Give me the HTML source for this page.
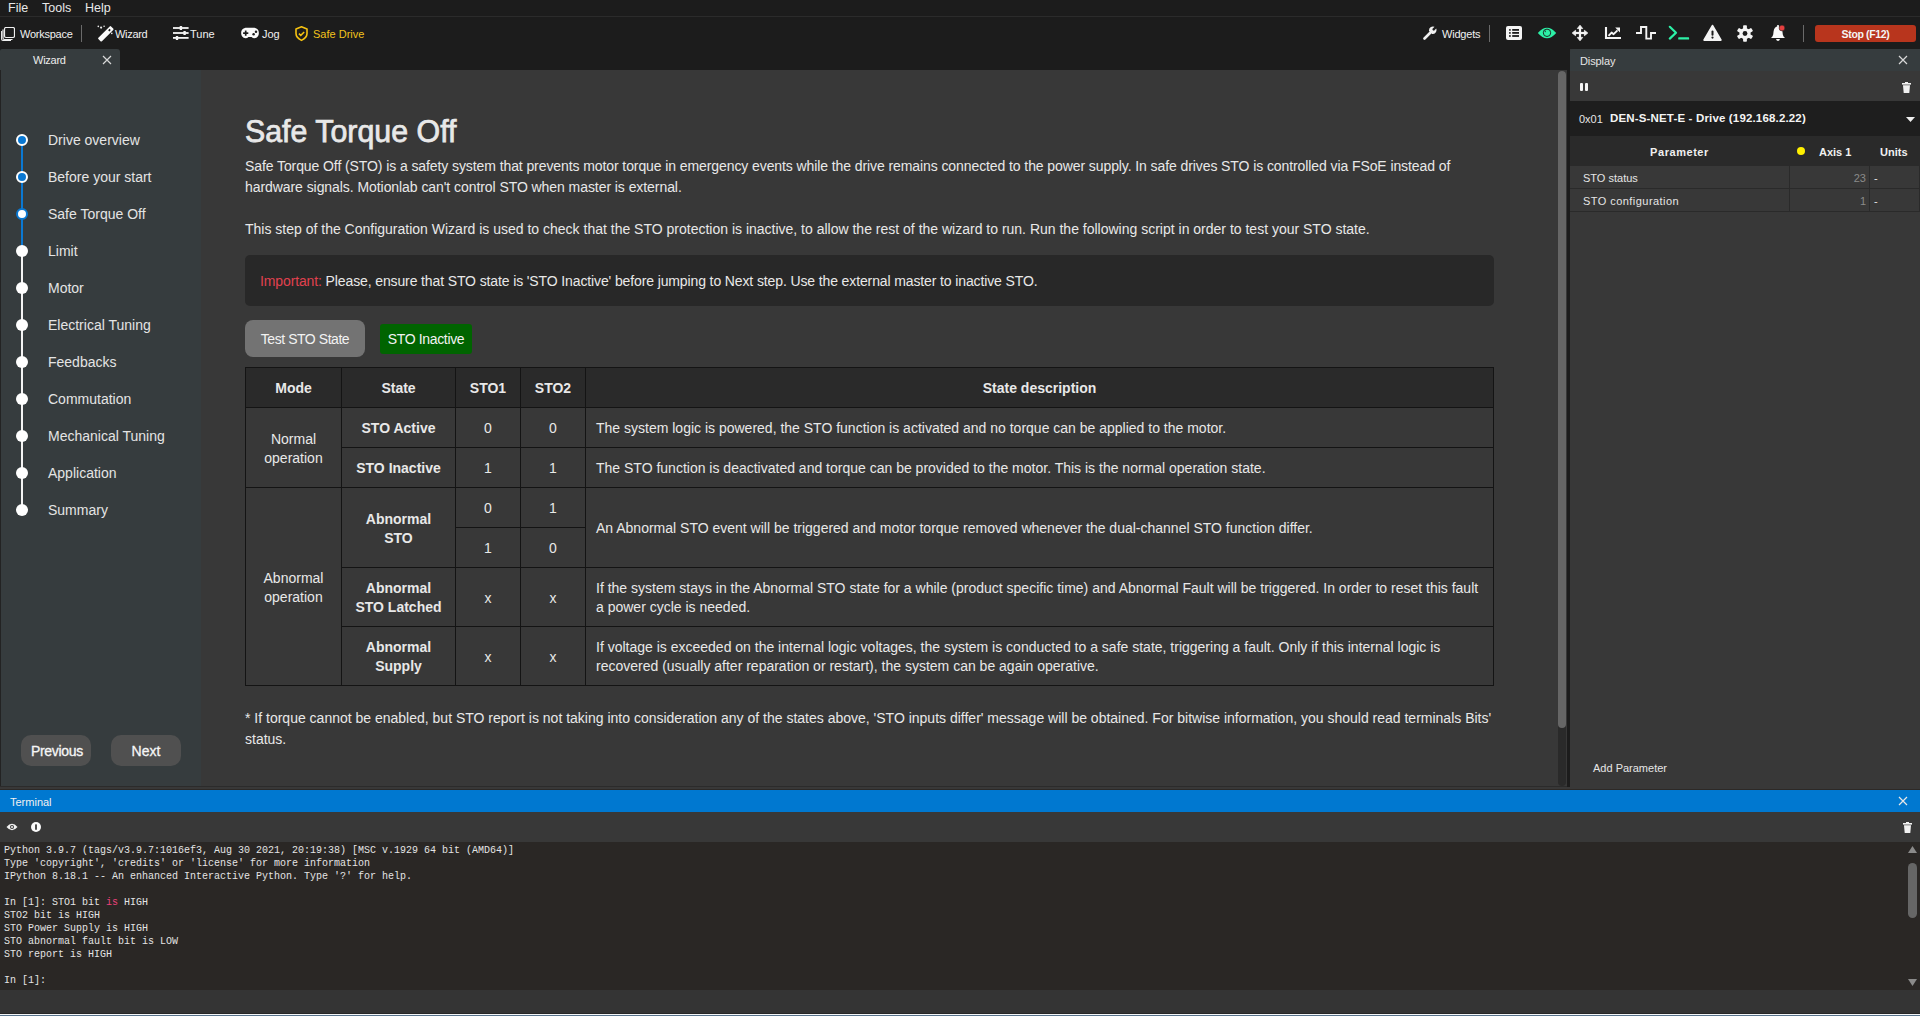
<!DOCTYPE html>
<html><head><meta charset="utf-8">
<style>
*{margin:0;padding:0;box-sizing:border-box}
html,body{width:1920px;height:1016px;overflow:hidden;background:#1c1c1c;font-family:"Liberation Sans",sans-serif;color:#e6e6e6}
.abs{position:absolute}
.t{position:absolute;white-space:pre;line-height:1}
/* menubar */
#menubar{left:0;top:0;width:1920px;height:17px;background:#1c1c1c;border-bottom:1px solid #2b2b2b}
#toolbar{left:0;top:18px;width:1920px;height:31px;background:#1c1c1c}
#sidebar{left:0;top:70px;width:201px;height:716px;background:#363c3e;border-left:1px solid #232323}
#main{left:201px;top:70px;width:1357px;height:716px;background:#383838}
#scroll{left:1558px;top:70px;width:9px;height:716px;background:#383838}
#split{left:1567px;top:49px;width:3px;height:738px;background:#1c1c1c}
#display{left:1570px;top:49px;width:350px;height:741px;background:#383838}
#gap{left:0;top:786px;width:1920px;height:4px;background:#383838;border-bottom:1px solid #2d2926}
#term{left:0;top:790px;width:1920px;height:226px;background:#383838}

#sto{border-collapse:collapse;table-layout:fixed;width:1248px}
#sto th,#sto td{border:1px solid #141414;font-size:14px;text-align:center;vertical-align:middle;color:#e8e8e8;line-height:19px;padding:2px 0 0 0}
#sto th{background:#2a2a2a;font-weight:bold}
#sto td{background:#383838}
#sto td.b{font-weight:bold}
#sto td.d{text-align:left;padding-left:10px;white-space:pre}
</style></head><body>
<div id="menubar" class="abs"></div>
<div id="toolbar" class="abs"></div>
<div id="sidebar" class="abs"></div>
<div id="main" class="abs"></div>
<div id="scroll" class="abs"></div>
<div id="split" class="abs"></div>
<div id="display" class="abs"></div>
<div id="gap" class="abs"></div>
<div id="term" class="abs"></div>
<div class="abs" style="left:0;top:786px;width:1567px;height:1px;background:#2b2b2b"></div>
<div class="abs" style="left:1567px;top:786px;width:3px;height:1px;background:#1c1c1c"></div>
<!-- MENUBAR -->
<div class="t" style="left:8px;top:2px;font-size:12.5px;color:#e8e8e8">File</div>
<div class="t" style="left:42px;top:2px;font-size:12.5px;color:#e8e8e8">Tools</div>
<div class="t" style="left:85px;top:2px;font-size:12.5px;color:#e8e8e8">Help</div>
<!-- TOOLBAR LEFT -->
<svg class="abs" style="left:1px;top:27px" width="14" height="14" viewBox="0 0 14 14"><rect x="3.5" y="0.5" width="10" height="10" rx="1.5" fill="#1c1c1c" stroke="#f0f0f0" stroke-width="1.2"/><path d="M2 2.5 V11 Q2 12.5 3.5 12.5 H11.5" fill="none" stroke="#f0f0f0" stroke-width="1.2"/><path d="M0.6 4 V12 Q0.6 13.4 2 13.4 H10" fill="none" stroke="#f0f0f0" stroke-width="1.1"/></svg>
<div class="t" style="left:20px;top:29px;font-size:11px;color:#f0f0f0;letter-spacing:-0.25px">Workspace</div>
<div class="abs" style="left:81px;top:25px;width:1px;height:17px;background:#6a6a6a"></div>
<svg class="abs" style="left:96px;top:24px" width="18" height="18" viewBox="0 0 18 18"><g transform="rotate(-45 9.8 9.8)"><rect x="0.8" y="7.3" width="18" height="5" rx="1" fill="#fafafa"/><rect x="14" y="8.9" width="1.9" height="1.8" fill="#1c1c1c"/></g><circle cx="2.3" cy="2.4" r="0.8" fill="#eee"/><circle cx="5.1" cy="3.6" r="1.1" fill="#eee"/><circle cx="8.1" cy="2.2" r="0.8" fill="#eee"/><circle cx="15.8" cy="9.4" r="0.8" fill="#eee"/></svg>
<div class="t" style="left:115px;top:29px;font-size:11px;color:#f0f0f0;letter-spacing:-0.3px">Wizard</div>
<svg class="abs" style="left:173px;top:25px" width="16" height="16" viewBox="0 0 16 16"><g fill="#f4f4f4"><rect x="0" y="2.1" width="15.6" height="1.8"/><rect x="0" y="7.1" width="15.6" height="1.8"/><rect x="0" y="12" width="15.6" height="1.8"/><rect x="6.7" y="1" width="2.4" height="4" rx="0.5"/><rect x="10.4" y="6" width="2.4" height="4" rx="0.5"/><rect x="2.8" y="10.9" width="2.4" height="4" rx="0.5"/></g></svg>
<div class="t" style="left:190px;top:29px;font-size:11px;color:#f0f0f0">Tune</div>
<svg class="abs" style="left:240px;top:27px" width="20" height="12" viewBox="0 0 20 12"><path d="M5.5 0.7 H14.5 A5.4 5.4 0 0 1 14.5 11.3 Q12.6 11.3 11.6 10 H8.4 Q7.4 11.3 5.5 11.3 A5.4 5.4 0 0 1 5.5 0.7 Z" fill="#fafafa"/><rect x="3.1" y="5.3" width="5.2" height="1.7" fill="#1c1c1c"/><rect x="4.85" y="3.55" width="1.7" height="5.2" fill="#1c1c1c"/><circle cx="13.6" cy="7.2" r="1.25" fill="#1c1c1c"/><circle cx="16" cy="4.8" r="1.25" fill="#1c1c1c"/></svg>
<div class="t" style="left:262px;top:29px;font-size:11px;color:#f0f0f0">Jog</div>
<svg class="abs" style="left:294px;top:25px" width="15" height="17" viewBox="0 0 15 17"><path d="M7.5 1.8 L13 3.9 V8.6 Q13 12.8 7.5 15.4 Q2 12.8 2 8.6 V3.9 Z" fill="none" stroke="#f5c211" stroke-width="1.6" stroke-linejoin="round"/><path d="M4.9 8.6 L6.8 10.4 L10.2 7" fill="none" stroke="#f5c211" stroke-width="1.5"/></svg>
<div class="t" style="left:313px;top:29px;font-size:11px;color:#f2c21b">Safe Drive</div>
<!-- TOOLBAR RIGHT -->
<svg class="abs" style="left:1423px;top:26px" width="14" height="14" viewBox="0 0 14 14"><path d="M1.5 12.5 L7 7" stroke="#f0f0f0" stroke-width="2.6" stroke-linecap="round"/><path d="M6 5 A4 4 0 0 1 11.5 0.8 L9.3 3 L9.8 4.3 L11 4.7 L13.2 2.5 A4 4 0 0 1 9 8 Z" fill="#f0f0f0"/></svg>
<div class="t" style="left:1442px;top:29px;font-size:11px;color:#f0f0f0;letter-spacing:-0.2px">Widgets</div>
<div class="abs" style="left:1489px;top:25px;width:1px;height:17px;background:#6a6a6a"></div>
<svg class="abs" style="left:1506px;top:26px" width="16" height="14" viewBox="0 0 16 14"><rect x="0" y="0" width="16" height="14" rx="2" fill="#f4f4f4"/><g fill="#1c1c1c"><circle cx="3.9" cy="3.9" r="0.95"/><circle cx="3.9" cy="6.9" r="0.95"/><circle cx="3.9" cy="10" r="0.95"/><rect x="6.2" y="3" width="6.8" height="1.8"/><rect x="6.2" y="6" width="6.8" height="1.8"/><rect x="6.2" y="9.1" width="6.8" height="1.8"/></g></svg>
<svg class="abs" style="left:1537px;top:26px" width="20" height="14" viewBox="0 0 20 14"><path d="M0.8 7 Q10 -3.5 19.2 7 Q10 17.5 0.8 7 Z" fill="#2cf0a6"/><circle cx="10" cy="6.8" r="3.7" fill="none" stroke="#1c1c1c" stroke-width="0.9"/><path d="M8.2 4.6 Q8 5.8 8.9 6" fill="none" stroke="#1c1c1c" stroke-width="0.9"/></svg>
<svg class="abs" style="left:1571px;top:24px" width="18" height="18" viewBox="0 0 18 18"><g fill="#f4f4f4" stroke="#f4f4f4" stroke-linejoin="round" stroke-width="0.8"><path d="M9 1.2 L11.7 4.6 H6.3 Z"/><path d="M9 16.8 L11.7 13.4 H6.3 Z"/><path d="M1.2 9 L4.6 6.3 V11.7 Z"/><path d="M16.8 9 L13.4 6.3 V11.7 Z"/></g><rect x="7.9" y="4" width="2.2" height="10" fill="#f4f4f4"/><rect x="4" y="7.9" width="10" height="2.2" fill="#f4f4f4"/></svg>
<svg class="abs" style="left:1604px;top:26px" width="18" height="14" viewBox="0 0 18 14"><path d="M2 1 V12 H17" fill="none" stroke="#f4f4f4" stroke-width="2.1"/><path d="M4.5 9.8 L7.6 6.6 L9.6 8.2 L13.5 4.3" fill="none" stroke="#f4f4f4" stroke-width="1.9" stroke-linejoin="round"/><path d="M11.2 1.6 H16 V6.4 Z" fill="#f4f4f4"/></svg>
<svg class="abs" style="left:1636px;top:26px" width="21" height="15" viewBox="0 0 21 15"><path d="M0 7 H5 V1 H10.3 V12.6 H15 V7 H20" fill="none" stroke="#f4f4f4" stroke-width="1.9"/></svg>
<svg class="abs" style="left:1668px;top:25px" width="22" height="16" viewBox="0 0 22 16"><path d="M1.8 1.8 L8 7.7 L1.8 13.6" fill="none" stroke="#2cf0a6" stroke-width="2.2" stroke-linecap="round" stroke-linejoin="round"/><rect x="10.2" y="12.3" width="10.9" height="2.3" rx="0.6" fill="#2cf0a6"/></svg>
<svg class="abs" style="left:1703px;top:24px" width="19" height="18" viewBox="0 0 19 18"><path d="M9.5 1.6 L17.8 16 H1.2 Z" fill="#f4f4f4" stroke="#f4f4f4" stroke-width="1.8" stroke-linejoin="round"/><rect x="8.5" y="6.6" width="2" height="5.2" rx="1" fill="#1c1c1c"/><circle cx="9.5" cy="13.6" r="1.1" fill="#1c1c1c"/></svg>
<svg class="abs" style="left:1737px;top:25px" width="16" height="17" viewBox="0 0 16 17"><g fill="#f4f4f4"><circle cx="8" cy="8.5" r="5.6"/><rect x="6.1" y="0.3" width="3.8" height="16.4" rx="0.8"/><rect x="6.1" y="0.3" width="3.8" height="16.4" rx="0.8" transform="rotate(60 8 8.5)"/><rect x="6.1" y="0.3" width="3.8" height="16.4" rx="0.8" transform="rotate(120 8 8.5)"/></g><circle cx="8" cy="8.5" r="2.4" fill="#1c1c1c"/></svg>
<svg class="abs" style="left:1770px;top:24px" width="17" height="18" viewBox="0 0 17 18"><rect x="7.1" y="0.9" width="1.8" height="2" rx="0.6" fill="#fafafa"/><path d="M8 2.2 Q4.2 2.6 3.6 7.2 L3.2 10.6 Q2.8 12.8 1 13.9 H15 Q13.2 12.8 12.8 10.6 L12.4 7.2 Q11.8 2.6 8 2.2 Z" fill="#fafafa"/><path d="M6 14.9 H10 Q9.4 16.9 8 16.9 Q6.6 16.9 6 14.9 Z" fill="#fafafa"/><circle cx="12" cy="4" r="2.9" fill="#e64040" stroke="#1c1c1c" stroke-width="0.6"/></svg>
<div class="abs" style="left:1803px;top:25px;width:1px;height:17px;background:#6a6a6a"></div>
<div class="abs" style="left:1815px;top:25px;width:101px;height:17px;background:#b8351d;border-radius:3px"></div>
<div class="t" style="left:1815px;top:29px;width:101px;text-align:center;font-size:10.5px;font-weight:bold;color:#f4f4f4;letter-spacing:-0.35px">Stop (F12)</div>
<!-- TAB -->
<div class="abs" style="left:0;top:49px;width:120px;height:21px;background:#363c3e;border-radius:2px 3px 0 0"></div>
<div class="t" style="left:33px;top:55px;font-size:11px;color:#ececec;letter-spacing:-0.25px">Wizard</div>
<svg class="abs" style="left:102px;top:55px" width="10" height="10" viewBox="0 0 10 10"><path d="M1 1 L9 9 M9 1 L1 9" stroke="#d8d8d8" stroke-width="1.2"/></svg>
<!-- SIDEBAR STEPPER -->
<div class="abs" style="left:21px;top:140px;width:2.4px;height:111px;background:#0a78d2"></div>
<div class="abs" style="left:21px;top:251px;width:2.4px;height:259px;background:#f4f4f4"></div>
<div class="abs" style="left:16px;top:134px;width:12px;height:12px;border-radius:50%;background:#0a78d2;border:2px solid #ffffff"></div>
<div class="t" style="left:48px;top:133px;font-size:14px;color:#e4e4e4">Drive overview</div>
<div class="abs" style="left:16px;top:171px;width:12px;height:12px;border-radius:50%;background:#0a78d2;border:2px solid #ffffff"></div>
<div class="t" style="left:48px;top:170px;font-size:14px;color:#e4e4e4">Before your start</div>
<div class="abs" style="left:16px;top:208px;width:12px;height:12px;border-radius:50%;background:#ffffff;border:2px solid #0a78d2"></div>
<div class="t" style="left:48px;top:207px;font-size:14px;color:#e4e4e4">Safe Torque Off</div>
<div class="abs" style="left:16px;top:245px;width:12px;height:12px;border-radius:50%;background:#ffffff"></div>
<div class="t" style="left:48px;top:244px;font-size:14px;color:#e4e4e4">Limit</div>
<div class="abs" style="left:16px;top:282px;width:12px;height:12px;border-radius:50%;background:#ffffff"></div>
<div class="t" style="left:48px;top:281px;font-size:14px;color:#e4e4e4">Motor</div>
<div class="abs" style="left:16px;top:319px;width:12px;height:12px;border-radius:50%;background:#ffffff"></div>
<div class="t" style="left:48px;top:318px;font-size:14px;color:#e4e4e4">Electrical Tuning</div>
<div class="abs" style="left:16px;top:356px;width:12px;height:12px;border-radius:50%;background:#ffffff"></div>
<div class="t" style="left:48px;top:355px;font-size:14px;color:#e4e4e4">Feedbacks</div>
<div class="abs" style="left:16px;top:393px;width:12px;height:12px;border-radius:50%;background:#ffffff"></div>
<div class="t" style="left:48px;top:392px;font-size:14px;color:#e4e4e4">Commutation</div>
<div class="abs" style="left:16px;top:430px;width:12px;height:12px;border-radius:50%;background:#ffffff"></div>
<div class="t" style="left:48px;top:429px;font-size:14px;color:#e4e4e4">Mechanical Tuning</div>
<div class="abs" style="left:16px;top:467px;width:12px;height:12px;border-radius:50%;background:#ffffff"></div>
<div class="t" style="left:48px;top:466px;font-size:14px;color:#e4e4e4">Application</div>
<div class="abs" style="left:16px;top:504px;width:12px;height:12px;border-radius:50%;background:#ffffff"></div>
<div class="t" style="left:48px;top:503px;font-size:14px;color:#e4e4e4">Summary</div>
<div class="abs" style="left:21px;top:735px;width:70px;height:31px;border-radius:10px;background:#505050"></div>
<div class="t" style="left:22px;top:744px;width:70px;text-align:center;font-size:14px;color:#f6f6f6;letter-spacing:-0.3px;-webkit-text-stroke:0.3px #f6f6f6">Previous</div>
<div class="abs" style="left:111px;top:735px;width:70px;height:31px;border-radius:10px;background:#505050"></div>
<div class="t" style="left:111px;top:744px;width:70px;text-align:center;font-size:14px;color:#f6f6f6;-webkit-text-stroke:0.3px #f6f6f6">Next</div>
<!-- MAIN CONTENT -->
<div class="t" style="left:245px;top:116px;font-size:31px;color:#e8e8e8;-webkit-text-stroke:0.75px #e8e8e8;transform:scaleX(0.979);transform-origin:0 0">Safe Torque Off</div>
<div class="t" style="left:245px;top:159px;font-size:14px;color:#e8e8e8;letter-spacing:-0.09px">Safe Torque Off (STO) is a safety system that prevents motor torque in emergency events while the drive remains connected to the power supply. In safe drives STO is controlled via FSoE instead of</div>
<div class="t" style="left:245px;top:180px;font-size:14px;color:#e8e8e8;letter-spacing:-0.065px">hardware signals. Motionlab can't control STO when master is external.</div>
<div class="t" style="left:245px;top:222px;font-size:14px;color:#e8e8e8">This step of the Configuration Wizard is used to check that the STO protection is inactive, to allow the rest of the wizard to run. Run the following script in order to test your STO state.</div>
<div class="abs" style="left:245px;top:255px;width:1249px;height:51px;background:#282828;border-radius:5px"></div>
<div class="t" style="left:260px;top:274px;font-size:14px;color:#e8e8e8;letter-spacing:-0.12px"><span style="color:#e0414f">Important:</span> Please, ensure that STO state is 'STO Inactive' before jumping to Next step. Use the external master to inactive STO.</div>
<div class="abs" style="left:245px;top:320px;width:120px;height:37px;background:#737373;border-radius:8px"></div>
<div class="t" style="left:245px;top:332px;width:120px;text-align:center;font-size:14px;color:#f2f2f2;letter-spacing:-0.45px">Test STO State</div>
<div class="abs" style="left:380px;top:324px;width:92px;height:30px;background:#006400;border-radius:3px"></div>
<div class="t" style="left:380px;top:332px;width:92px;text-align:center;font-size:14px;color:#f2f2f2;letter-spacing:-0.35px">STO Inactive</div>
<!-- TABLE -->
<table id="sto" class="abs" style="left:245px;top:367px">
<colgroup><col style="width:96px"><col style="width:114px"><col style="width:65px"><col style="width:65px"><col style="width:908px"></colgroup>
<tr class="hd" style="height:40px"><th>Mode</th><th>State</th><th>STO1</th><th>STO2</th><th>State description</th></tr>
<tr style="height:40px"><td rowspan="2" class="m">Normal<br>operation</td><td class="b">STO Active</td><td>0</td><td>0</td><td class="d">The system logic is powered, the STO function is activated and no torque can be applied to the motor.</td></tr>
<tr style="height:40px"><td class="b">STO Inactive</td><td>1</td><td>1</td><td class="d">The STO function is deactivated and torque can be provided to the motor. This is the normal operation state.</td></tr>
<tr style="height:40px"><td rowspan="4" class="m">Abnormal<br>operation</td><td rowspan="2" class="b">Abnormal<br>STO</td><td>0</td><td>1</td><td rowspan="2" class="d">An Abnormal STO event will be triggered and motor torque removed whenever the dual-channel STO function differ.</td></tr>
<tr style="height:40px"><td>1</td><td>0</td></tr>
<tr style="height:59px"><td class="b">Abnormal<br>STO Latched</td><td>x</td><td>x</td><td class="d">If the system stays in the Abnormal STO state for a while (product specific time) and Abnormal Fault will be triggered. In order to reset this fault<br>a power cycle is needed.</td></tr>
<tr style="height:59px"><td class="b">Abnormal<br>Supply</td><td>x</td><td>x</td><td class="d">If voltage is exceeded on the internal logic voltages, the system is conducted to a safe state, triggering a fault. Only if this internal logic is<br>recovered (usually after reparation or restart), the system can be again operative.</td></tr>
</table>
<div class="t" style="left:245px;top:711px;font-size:14px;color:#e8e8e8">* If torque cannot be enabled, but STO report is not taking into consideration any of the states above, 'STO inputs differ' message will be obtained. For bitwise information, you should read terminals Bits'</div>
<div class="t" style="left:245px;top:732px;font-size:14px;color:#e8e8e8">status.</div>
<!-- SCROLLBAR main -->
<div class="abs" style="left:1558px;top:71px;width:8px;height:715px;background:#2a2a2a;border-radius:4px"></div>
<div class="abs" style="left:1558px;top:71px;width:8px;height:657px;background:#666666;border-radius:4px"></div>
<!-- DISPLAY PANEL -->
<div class="abs" style="left:1570px;top:49px;width:350px;height:22px;background:#363c3e;border-radius:3px 0 0 0"></div>
<div class="t" style="left:1580px;top:56px;font-size:11px;color:#e6e6e6;letter-spacing:-0.1px">Display</div>
<svg class="abs" style="left:1898px;top:55px" width="10" height="10" viewBox="0 0 10 10"><path d="M1 1 L9 9 M9 1 L1 9" stroke="#d8d8d8" stroke-width="1.2"/></svg>
<div class="abs" style="left:1570px;top:71px;width:350px;height:30px;background:#383838"></div>
<div class="abs" style="left:1580px;top:83px;width:3px;height:8px;background:#f4f4f4;border-radius:1px"></div>
<div class="abs" style="left:1585px;top:83px;width:3px;height:8px;background:#f4f4f4;border-radius:1px"></div>
<svg class="abs" style="left:1901.5px;top:82px" width="9" height="11" viewBox="0 0 9 11"><rect x="0" y="1" width="9" height="1.6" fill="#f0f0f0"/><rect x="3" y="0" width="3" height="1.5" fill="#f0f0f0"/><path d="M1 3.2 H8 L7.3 11 H1.7 Z" fill="#f0f0f0"/></svg>
<div class="abs" style="left:1570px;top:101px;width:350px;height:35px;background:#1e1e1e"></div>
<div class="t" style="left:1579px;top:114px;font-size:11px;color:#e6e6e6">0x01</div><div class="t" style="left:1610px;top:113px;font-size:11.5px;font-weight:bold;color:#f4f4f4;letter-spacing:0.16px">DEN-S-NET-E - Drive (192.168.2.22)</div>
<svg class="abs" style="left:1905.5px;top:116.5px" width="9" height="5" viewBox="0 0 9 5"><path d="M0 0 H9 L4.5 5 Z" fill="#f0f0f0"/></svg>
<div class="abs" style="left:1570px;top:136px;width:350px;height:30px;background:#2a2a2a"></div>
<div class="t" style="left:1570px;top:147px;width:219px;text-align:center;font-size:11px;font-weight:bold;color:#f0f0f0;letter-spacing:0.55px">Parameter</div>
<div class="abs" style="left:1797px;top:147px;width:8px;height:8px;border-radius:50%;background:#fff000"></div>
<div class="t" style="left:1819px;top:147px;font-size:11px;font-weight:bold;color:#f0f0f0">Axis 1</div>
<div class="t" style="left:1880px;top:147px;font-size:11px;font-weight:bold;color:#f0f0f0">Units</div>
<div class="abs" style="left:1570px;top:166px;width:350px;height:23px;background:#383838;border-bottom:1px solid #2a2a2a"></div>
<div class="abs" style="left:1570px;top:189px;width:350px;height:23px;background:#383838;border-bottom:1px solid #2a2a2a"></div>
<div class="abs" style="left:1789px;top:166px;width:1px;height:46px;background:#2a2a2a"></div>
<div class="abs" style="left:1869px;top:166px;width:1px;height:46px;background:#2a2a2a"></div>
<div class="abs" style="left:1919px;top:166px;width:1px;height:46px;background:#2a2a2a"></div>
<div class="t" style="left:1583px;top:173px;font-size:11px;color:#e6e6e6">STO status</div>
<div class="t" style="left:1583px;top:196px;font-size:11px;color:#e6e6e6;letter-spacing:0.45px">STO configuration</div>
<div class="t" style="left:1790px;top:173px;width:76px;text-align:right;font-size:11px;color:#8a8a8a">23</div>
<div class="t" style="left:1790px;top:196px;width:76px;text-align:right;font-size:11px;color:#8a8a8a">1</div>
<div class="t" style="left:1874px;top:173px;font-size:11px;color:#e6e6e6">-</div>
<div class="t" style="left:1874px;top:196px;font-size:11px;color:#e6e6e6">-</div>
<div class="t" style="left:1593px;top:763px;font-size:11px;color:#e6e6e6">Add Parameter</div>
<!-- TERMINAL -->
<div class="abs" style="left:0;top:790px;width:1920px;height:22px;background:#0078d0"></div>
<div class="t" style="left:10px;top:797px;font-size:11px;color:#f0f0f0">Terminal</div>
<svg class="abs" style="left:1898px;top:796px" width="10" height="10" viewBox="0 0 10 10"><path d="M1 1 L9 9 M9 1 L1 9" stroke="#e8e8e8" stroke-width="1.2"/></svg>
<div class="abs" style="left:0;top:812px;width:1920px;height:30px;background:#383838"></div>
<svg class="abs" style="left:6px;top:823px" width="12" height="8" viewBox="0 0 12 8"><path d="M0.5 4 Q6 -2.5 11.5 4 Q6 10.5 0.5 4 Z" fill="#f0f0f0"/><circle cx="6" cy="4" r="2" fill="#383838"/><circle cx="6" cy="4" r="1" fill="#f0f0f0"/></svg>
<svg class="abs" style="left:31px;top:822px" width="10" height="10" viewBox="0 0 10 10"><circle cx="5" cy="5" r="5" fill="#fafafa"/><rect x="4.1" y="2.3" width="1.8" height="5.5" rx="0.4" fill="#3a3a3a"/></svg>
<svg class="abs" style="left:1903px;top:822px" width="9" height="11" viewBox="0 0 9 11"><rect x="0" y="1" width="9" height="1.6" fill="#f0f0f0"/><rect x="3" y="0" width="3" height="1.5" fill="#f0f0f0"/><path d="M1 3.2 H8 L7.3 11 H1.7 Z" fill="#f0f0f0"/></svg>
<div class="abs" style="left:0;top:842px;width:1920px;height:148px;background:#2a2725"></div>
<pre class="abs" style="left:4px;top:844px;font-family:'Liberation Mono',monospace;font-size:10px;line-height:13px;color:#e4e4e4">Python 3.9.7 (tags/v3.9.7:1016ef3, Aug 30 2021, 20:19:38) [MSC v.1929 64 bit (AMD64)]
Type 'copyright', 'credits' or 'license' for more information
IPython 8.18.1 -- An enhanced Interactive Python. Type '?' for help.

In [1]: STO1 bit <span style="color:#e9417a">is</span> HIGH
STO2 bit is HIGH
STO Power Supply is HIGH
STO abnormal fault bit is LOW
STO report is HIGH

In [1]: </pre>
<svg class="abs" style="left:1908px;top:846px" width="9" height="7" viewBox="0 0 9 7"><path d="M4.5 0 L9 7 H0 Z" fill="#8a8a8a"/></svg>
<div class="abs" style="left:1908px;top:863px;width:9px;height:55px;background:#666;border-radius:4.5px"></div>
<svg class="abs" style="left:1908px;top:979px" width="9" height="7" viewBox="0 0 9 7"><path d="M0 0 H9 L4.5 7 Z" fill="#8a8a8a"/></svg>
<div class="abs" style="left:0;top:990px;width:1920px;height:23px;background:#343434"></div>
<div class="abs" style="left:0;top:1013px;width:1920px;height:1px;background:#262626"></div>
<div class="abs" style="left:0;top:1014px;width:1920px;height:1px;background:#f4f6f8"></div>
<div class="abs" style="left:0;top:1015px;width:1920px;height:1px;background:#58738c"></div>
</body></html>
